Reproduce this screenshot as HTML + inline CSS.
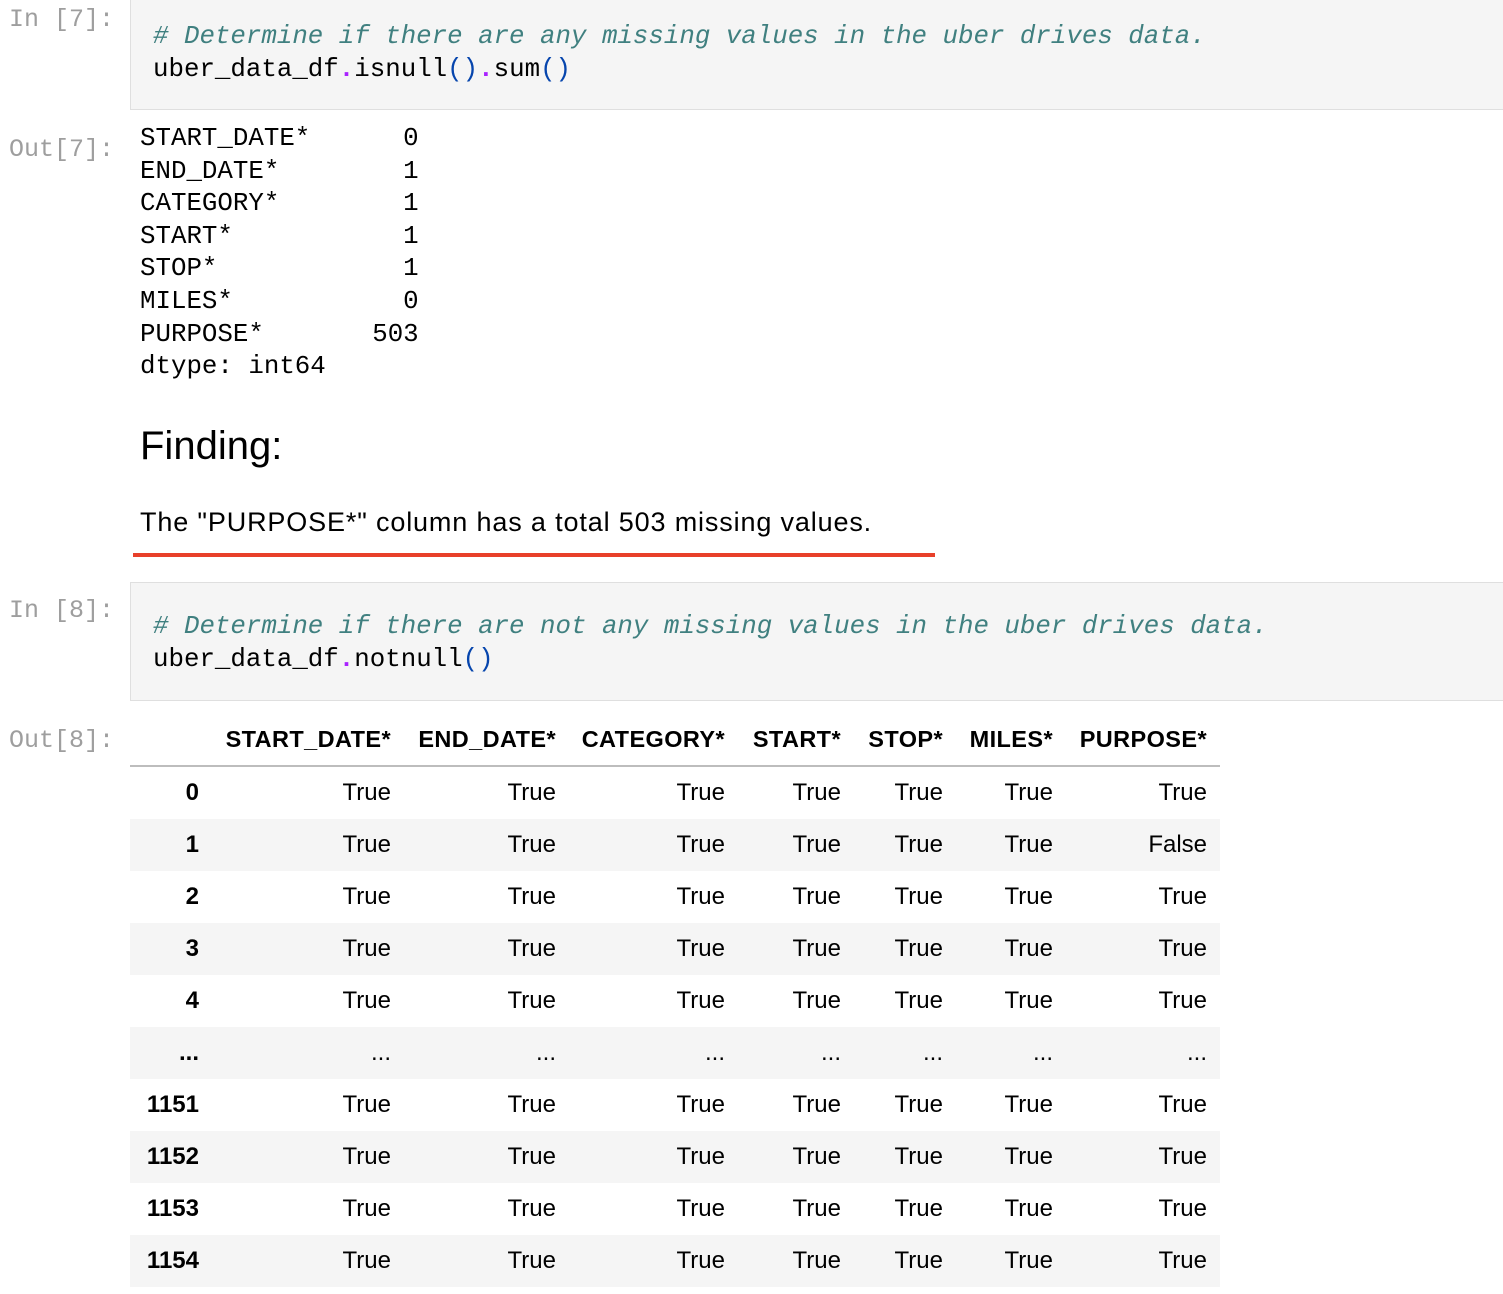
<!DOCTYPE html>
<html><head><meta charset="utf-8"><style>
body{margin:0;width:1503px;height:1294px;background:#fff;position:relative;overflow:hidden;font-family:"Liberation Sans",sans-serif;color:#000}
.a{position:absolute;white-space:pre}
.m{font-family:"Liberation Mono",monospace;font-size:25.8px}
.p{font-family:"Liberation Mono",monospace;font-size:25px;color:#9e9e9e}
.box{position:absolute;left:130px;width:1380px;background:#f5f5f5;border:1px solid #dfdfdf;box-sizing:border-box}
.c{color:#408080;font-style:italic}
.o{color:#aa22ff;font-weight:bold}
.b{color:#0645ad}
table{position:absolute;left:130px;top:714px;border-collapse:collapse;font-size:24px;width:1090px;table-layout:fixed}
th{font-weight:bold;text-align:right;padding:0 13px 0 0;height:51px;font-size:23.5px;letter-spacing:0.4px;white-space:nowrap}
thead tr{border-bottom:2px solid #bdbdbd}
td{text-align:right;padding:0 13px 0 0;height:52px}
td:first-child{font-weight:bold}
tbody tr:nth-child(even){background:#f5f5f5}
</style></head><body>
<div class="a p" style="left:9px;top:5px">In [7]:</div>
<div class="box" style="top:-1px;height:111px"></div>
<div class="a m" style="left:153px;top:20px;line-height:33px"><span class="c"># Determine if there are any missing values in the uber drives data.</span>
uber_data_df<span class="o">.</span>isnull<span class="b">()</span><span class="o">.</span>sum<span class="b">()</span></div>
<div class="a p" style="left:9px;top:135px">Out[7]:</div>
<div class="a m" style="left:140px;top:123px;line-height:32.6px">START_DATE*      0
END_DATE*        1
CATEGORY*        1
START*           1
STOP*            1
MILES*           0
PURPOSE*       503
dtype: int64</div>
<div class="a" style="left:140px;top:424px;font-size:40px;font-weight:500">Finding:</div>
<div class="a" style="left:140px;top:507px;font-size:27px;letter-spacing:0.85px">The "PURPOSE*" column has a total 503 missing values.</div>
<div class="a" style="left:133px;top:553px;width:802px;height:4px;background:#e8402a"></div>
<div class="a p" style="left:9px;top:596px">In [8]:</div>
<div class="box" style="top:582px;height:119px"></div>
<div class="a m" style="left:153px;top:610px;line-height:33px"><span class="c"># Determine if there are not any missing values in the uber drives data.</span>
uber_data_df<span class="o">.</span>notnull<span class="b">()</span></div>
<div class="a p" style="left:9px;top:726px">Out[8]:</div>
<table>
<colgroup><col style="width:82px"><col style="width:192px"><col style="width:165px"><col style="width:169px"><col style="width:116px"><col style="width:102px"><col style="width:110px"><col style="width:154px"></colgroup>
<thead><tr><th></th><th>START_DATE*</th><th>END_DATE*</th><th>CATEGORY*</th><th>START*</th><th>STOP*</th><th>MILES*</th><th>PURPOSE*</th></tr></thead>
<tbody>
<tr><td>0</td><td>True</td><td>True</td><td>True</td><td>True</td><td>True</td><td>True</td><td>True</td></tr>
<tr><td>1</td><td>True</td><td>True</td><td>True</td><td>True</td><td>True</td><td>True</td><td>False</td></tr>
<tr><td>2</td><td>True</td><td>True</td><td>True</td><td>True</td><td>True</td><td>True</td><td>True</td></tr>
<tr><td>3</td><td>True</td><td>True</td><td>True</td><td>True</td><td>True</td><td>True</td><td>True</td></tr>
<tr><td>4</td><td>True</td><td>True</td><td>True</td><td>True</td><td>True</td><td>True</td><td>True</td></tr>
<tr><td>...</td><td>...</td><td>...</td><td>...</td><td>...</td><td>...</td><td>...</td><td>...</td></tr>
<tr><td>1151</td><td>True</td><td>True</td><td>True</td><td>True</td><td>True</td><td>True</td><td>True</td></tr>
<tr><td>1152</td><td>True</td><td>True</td><td>True</td><td>True</td><td>True</td><td>True</td><td>True</td></tr>
<tr><td>1153</td><td>True</td><td>True</td><td>True</td><td>True</td><td>True</td><td>True</td><td>True</td></tr>
<tr><td>1154</td><td>True</td><td>True</td><td>True</td><td>True</td><td>True</td><td>True</td><td>True</td></tr>
</tbody></table>
</body></html>
